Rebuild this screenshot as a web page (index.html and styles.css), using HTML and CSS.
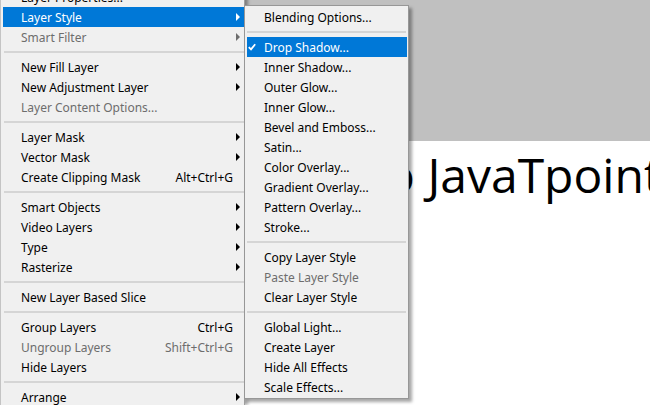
FILE: index.html
```html
<!DOCTYPE html>
<html>
<head>
<meta charset="utf-8">
<link rel="stylesheet" href="styles.css">
</head>
<body>
<div class="screen">
  <nav class="menu main-menu">
    <div class="item"><span class="label">Layer Properties...</span></div>
    <div class="item active"><span class="label">Layer Style</span><span class="arrow-cell"><span class="arrow"></span></span></div>
    <div class="item disabled"><span class="label">Smart Filter</span><span class="arrow-cell"><span class="arrow"></span></span></div>
    <div class="sep"></div>
    <div class="item"><span class="label">New Fill Layer</span><span class="arrow-cell"><span class="arrow"></span></span></div>
    <div class="item"><span class="label">New Adjustment Layer</span><span class="arrow-cell"><span class="arrow"></span></span></div>
    <div class="item disabled"><span class="label">Layer Content Options...</span><span class="arrow-cell"></span></div>
    <div class="sep"></div>
    <div class="item"><span class="label">Layer Mask</span><span class="arrow-cell"><span class="arrow"></span></span></div>
    <div class="item"><span class="label">Vector Mask</span><span class="arrow-cell"><span class="arrow"></span></span></div>
    <div class="item"><span class="label">Create Clipping Mask</span><span class="shortcut">Alt+Ctrl+G</span><span class="arrow-cell"></span></div>
    <div class="sep"></div>
    <div class="item"><span class="label">Smart Objects</span><span class="arrow-cell"><span class="arrow"></span></span></div>
    <div class="item"><span class="label">Video Layers</span><span class="arrow-cell"><span class="arrow"></span></span></div>
    <div class="item"><span class="label">Type</span><span class="arrow-cell"><span class="arrow"></span></span></div>
    <div class="item"><span class="label">Rasterize</span><span class="arrow-cell"><span class="arrow"></span></span></div>
    <div class="sep"></div>
    <div class="item"><span class="label">New Layer Based Slice</span><span class="arrow-cell"></span></div>
    <div class="sep"></div>
    <div class="item"><span class="label">Group Layers</span><span class="shortcut">Ctrl+G</span><span class="arrow-cell"></span></div>
    <div class="item disabled"><span class="label">Ungroup Layers</span><span class="shortcut">Shift+Ctrl+G</span><span class="arrow-cell"></span></div>
    <div class="item"><span class="label">Hide Layers</span><span class="arrow-cell"></span></div>
    <div class="sep"></div>
    <div class="item"><span class="label">Arrange</span><span class="arrow-cell"><span class="arrow"></span></span></div>
  </nav>
  <main class="canvas">
    <div class="pasteboard"></div>
    <div class="document">
      <div class="doc-text">to JavaTpoint</div>
    </div>
  </main>
  <div class="menu submenu">
    <div class="sub-item"><span class="check-cell"></span><span class="label">Blending Options...</span></div>
    <div class="sub-sep"></div>
    <div class="sub-item active"><span class="check-cell"><svg class="check" width="8" height="8" viewBox="0 0 8 8"><path d="M0.8 4.2 L3 6.4 L7.2 1.2" fill="none" stroke="#ffffff" stroke-width="1.8"/></svg></span><span class="label">Drop Shadow...</span></div>
    <div class="sub-item"><span class="check-cell"></span><span class="label">Inner Shadow...</span></div>
    <div class="sub-item"><span class="check-cell"></span><span class="label">Outer Glow...</span></div>
    <div class="sub-item"><span class="check-cell"></span><span class="label">Inner Glow...</span></div>
    <div class="sub-item"><span class="check-cell"></span><span class="label">Bevel and Emboss...</span></div>
    <div class="sub-item"><span class="check-cell"></span><span class="label">Satin...</span></div>
    <div class="sub-item"><span class="check-cell"></span><span class="label">Color Overlay...</span></div>
    <div class="sub-item"><span class="check-cell"></span><span class="label">Gradient Overlay...</span></div>
    <div class="sub-item"><span class="check-cell"></span><span class="label">Pattern Overlay...</span></div>
    <div class="sub-item"><span class="check-cell"></span><span class="label">Stroke...</span></div>
    <div class="sub-sep"></div>
    <div class="sub-item"><span class="check-cell"></span><span class="label">Copy Layer Style</span></div>
    <div class="sub-item disabled"><span class="check-cell"></span><span class="label">Paste Layer Style</span></div>
    <div class="sub-item"><span class="check-cell"></span><span class="label">Clear Layer Style</span></div>
    <div class="sub-sep"></div>
    <div class="sub-item"><span class="check-cell"></span><span class="label">Global Light...</span></div>
    <div class="sub-item"><span class="check-cell"></span><span class="label">Create Layer</span></div>
    <div class="sub-item"><span class="check-cell"></span><span class="label">Hide All Effects</span></div>
    <div class="sub-item"><span class="check-cell"></span><span class="label">Scale Effects...</span></div>
  </div>
</div>
</body>
</html>
```

FILE: styles.css
```css
html, body {
  margin: 0;
  padding: 0;
}
body {
  width: 650px;
  height: 405px;
  overflow: hidden;
  font-family: "Noto Sans", "Open Sans", sans-serif;
  font-size: 12px;
  color: #000;
}
.screen {
  position: relative;
  display: flex;
  width: 650px;
  height: 405px;
  overflow: hidden;
  background: #c0c0c0;
}
.menu {
  background: #f0f0f0;
  box-sizing: border-box;
}
.main-menu {
  flex: none;
  width: 245px;
  margin-top: -14px;
  padding: 1px 0 0 2px;
  border-left: 1px solid #c4c4c4;
  border-right: 1px solid #a0a0a0;
  box-shadow: 3px 0 3px rgba(0, 0, 0, 0.35);
  position: relative;
  z-index: 1;
}
.item, .sub-item {
  display: flex;
  align-items: center;
  height: 20px;
  white-space: nowrap;
}
.item .label {
  flex: 1;
  padding-left: 18px;
}
.shortcut {
  text-align: right;
}
.arrow-cell {
  width: 11px;
  display: flex;
  align-items: center;
}
.arrow {
  display: block;
  width: 0;
  height: 0;
  margin-left: 3px;
  border-top: 4px solid transparent;
  border-bottom: 4px solid transparent;
  border-left: 4px solid #000;
}
.active {
  background: #0078d7;
  color: #fff;
}
.active .arrow {
  border-left-color: #fff;
}
.disabled {
  color: #6d6d6d;
}
.disabled .arrow {
  border-left-color: #6d6d6d;
}
.sep, .sub-sep {
  height: 10px;
  display: flex;
  align-items: center;
}
.sep::before, .sub-sep::before {
  content: "";
  flex: 1;
  height: 2px;
  background: #d5d5d5;
}
.sep::before {
  margin-left: 1px;
}
.sub-sep::before {
  margin-right: 1px;
}
.canvas {
  flex: 1;
  display: flex;
  flex-direction: column;
}
.pasteboard {
  height: 141px;
  flex: none;
  background: #c0c0c0;
}
.document {
  flex: 1;
  background: #fff;
  overflow: hidden;
}
.doc-text {
  font-family: "Open Sans", "Noto Sans", sans-serif;
  font-size: 48px;
  line-height: 1;
  padding-top: 10px;
  padding-left: 124px;
  white-space: nowrap;
  color: #000;
}
.submenu {
  position: absolute;
  left: 244px;
  top: 5px;
  width: 165px;
  padding: 1px 1px 1px 2px;
  border: 1px solid #979797;
  box-shadow: 3px 3px 3px rgba(0, 0, 0, 0.35);
  z-index: 2;
}
.check-cell {
  width: 17px;
  flex: none;
  display: flex;
  align-items: center;
}
.check {
  margin-left: 1px;
  display: block;
}
```
